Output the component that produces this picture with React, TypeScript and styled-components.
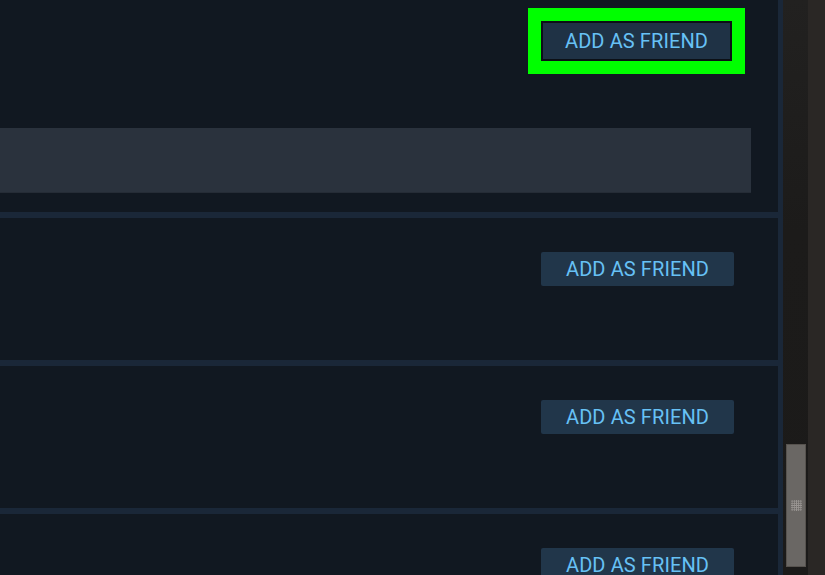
import styled, { createGlobalStyle } from "styled-components";

const GlobalStyle = createGlobalStyle`
  html, body {
    margin: 0;
    padding: 0;
    background: #111821;
    overflow: hidden;
  }
  body {
    font-family: Roboto, "Liberation Sans", Arial, sans-serif;
  }
`;

const Page = styled.div`
  width: 825px;
  height: 575px;
  display: flex;
  overflow: hidden;
`;

const List = styled.div`
  width: 783px;
  flex-shrink: 0;
  display: flex;
  flex-direction: column;
  gap: 6px;
  background: #1a2738;
  padding-right: 5px;
  box-sizing: border-box;
`;

const Card = styled.div<{ $height: number; $top: number }>`
  height: ${(p) => p.$height}px;
  flex-shrink: 0;
  background: #111821;
  box-sizing: border-box;
  padding-top: ${(p) => p.$top}px;
  display: flex;
  flex-direction: column;
`;

const ButtonRow = styled.div<{ $right: number }>`
  display: flex;
  justify-content: flex-end;
  padding-right: ${(p) => p.$right}px;
`;

const FriendButton = styled.button`
  width: 193px;
  height: 34px;
  border: none;
  border-radius: 2px;
  background: #21364a;
  color: #67c1f5;
  font-family: Roboto, "Liberation Sans", Arial, sans-serif;
  font-size: 20px;
  font-weight: 400;
  letter-spacing: 0.1px;
  text-transform: uppercase;
  padding: 0;
  cursor: pointer;
`;

const Highlight = styled.div`
  border: 13px solid #00ff00;
  display: flex;
`;

const HighlightedButton = styled(FriendButton)`
  width: 191px;
  height: 40px;
  border: 2px solid #0c1016;
  border-radius: 0;
  background: #1f3245;
`;

const InfoBar = styled.div`
  margin-top: 54px;
  height: 65px;
  width: 751px;
  background: #2a323d;
  border-bottom: 1px solid #252c36;
  box-sizing: border-box;
`;

const ScrollArea = styled.div`
  flex: 1;
  display: flex;
`;

const Track = styled.div`
  width: 25px;
  background: linear-gradient(180deg, #222120 0%, #1c1b1a 40%, #1b1a19 100%);
  display: flex;
  flex-direction: column;
  padding: 0 2px 0 3px;
  box-sizing: border-box;
`;

const Thumb = styled.div`
  margin-top: 444px;
  height: 123px;
  background: #6a6764;
  border: 1px solid #57534f;
  box-sizing: border-box;
  display: flex;
  align-items: center;
  justify-content: center;
`;

const Grip = styled.div`
  width: 11px;
  height: 11px;
  background-image: radial-gradient(circle, #9a9693 0.8px, transparent 1px);
  background-size: 2.2px 2.2px;
`;

const Edge = styled.div`
  flex: 1;
  background: #2a2725;
`;

const Label = "Add as friend";

export default function App() {
  return (
    <>
      <GlobalStyle />
      <Page>
        <List>
          <Card $height={212} $top={8}>
            <ButtonRow $right={33}>
              <Highlight>
                <HighlightedButton>{Label}</HighlightedButton>
              </Highlight>
            </ButtonRow>
            <InfoBar />
          </Card>
          <Card $height={142} $top={34}>
            <ButtonRow $right={44}>
              <FriendButton>{Label}</FriendButton>
            </ButtonRow>
          </Card>
          <Card $height={142} $top={34}>
            <ButtonRow $right={44}>
              <FriendButton>{Label}</FriendButton>
            </ButtonRow>
          </Card>
          <Card $height={142} $top={34}>
            <ButtonRow $right={44}>
              <FriendButton>{Label}</FriendButton>
            </ButtonRow>
          </Card>
        </List>
        <ScrollArea>
          <Track>
            <Thumb>
              <Grip />
            </Thumb>
          </Track>
          <Edge />
        </ScrollArea>
      </Page>
    </>
  );
}
